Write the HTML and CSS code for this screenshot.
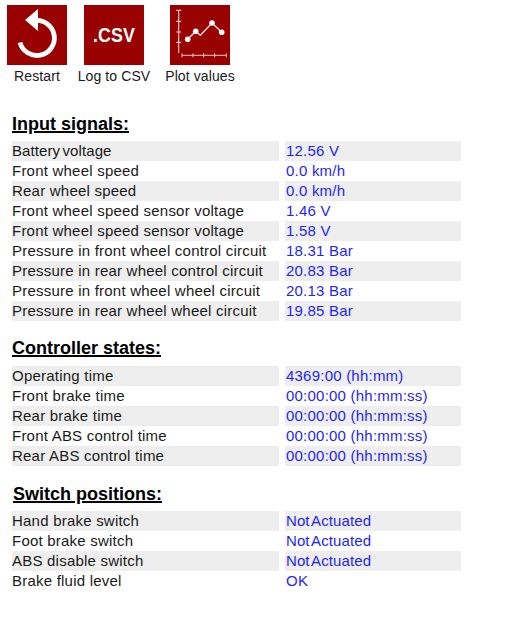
FILE: index.html
```html
<!DOCTYPE html>
<html lang="en">
<head>
  <meta charset="UTF-8">
  <title>ABS diagnostics</title>
  <link rel="stylesheet" href="styles.css">
</head>
<body>

  <div class="toolbar">
    <div class="tool tool-restart">
      <svg class="icon" viewBox="0 0 60 60">
        <rect width="60" height="60" fill="#990000"/>
        <path d="M29 15.500 A17.500 17.500 0 1 1 13 37.500" fill="none" stroke="#fff" stroke-width="4.800"/>
        <path d="M18 15 L31 4 L31 26 Z" fill="#fff"/>
      </svg>
      <span>Restart</span>
    </div>
    <div class="tool tool-csv">
      <svg class="icon" viewBox="0 0 60 60">
        <rect width="60" height="60" fill="#990000"/>
        <text x="9" y="37" class="csv-text" textLength="42" lengthAdjust="spacingAndGlyphs">.CSV</text>
      </svg>
      <span>Log to CSV</span>
    </div>
    <div class="tool tool-plot">
      <svg class="icon" viewBox="0 0 60 60">
        <rect width="60" height="60" fill="#990000"/>
        <path d="M8.700 5 V48 M6.200 5.300 H11.200 M6.200 16.300 H11.200 M6.200 27 H11.200 M6.200 37.300 H11.200" fill="none" stroke="#e8c8c8" stroke-width="1.200"/>
        <path d="M12 50.300 H56.300 M12 48.300 V52.300 M23 48.300 V52.300 M33.700 48.300 V52.300 M44.700 48.300 V52.300 M56.300 48.300 V52.300" fill="none" stroke="#e8c8c8" stroke-width="1"/>
        <path d="M17.700 34.300 L25.700 26.300 L30.300 30.300 L42 18 L51.700 27.300" fill="none" stroke="#f0d8d8" stroke-width="1.500"/>
        <circle cx="17.700" cy="34.300" r="2.800" fill="#fff"/>
        <circle cx="25.700" cy="26.300" r="2.800" fill="#fff"/>
        <circle cx="42" cy="18" r="2.800" fill="#fff"/>
        <circle cx="51.700" cy="27.300" r="2.800" fill="#fff"/>
      </svg>
      <span>Plot values</span>
    </div>
  </div>

  <h2 class="first">Input signals:</h2>
  <div class="rows">
    <div class="row"><div class="name tight">Battery voltage</div><div class="value">12.56 V</div></div>
    <div class="row"><div class="name">Front wheel speed</div><div class="value">0.0 km/h</div></div>
    <div class="row"><div class="name">Rear wheel speed</div><div class="value">0.0 km/h</div></div>
    <div class="row"><div class="name">Front wheel speed sensor voltage</div><div class="value">1.46 V</div></div>
    <div class="row"><div class="name">Front wheel speed sensor voltage</div><div class="value">1.58 V</div></div>
    <div class="row"><div class="name">Pressure in front wheel control circuit</div><div class="value">18.31 Bar</div></div>
    <div class="row"><div class="name">Pressure in rear wheel control circuit</div><div class="value">20.83 Bar</div></div>
    <div class="row"><div class="name">Pressure in front wheel wheel circuit</div><div class="value">20.13 Bar</div></div>
    <div class="row"><div class="name">Pressure in rear wheel wheel circuit</div><div class="value">19.85 Bar</div></div>
  </div>

  <h2>Controller states:</h2>
  <div class="rows">
    <div class="row"><div class="name">Operating time</div><div class="value">4369:00 (hh:mm)</div></div>
    <div class="row"><div class="name">Front brake time</div><div class="value">00:00:00 (hh:mm:ss)</div></div>
    <div class="row"><div class="name">Rear brake time</div><div class="value">00:00:00 (hh:mm:ss)</div></div>
    <div class="row"><div class="name">Front ABS control time</div><div class="value">00:00:00 (hh:mm:ss)</div></div>
    <div class="row"><div class="name">Rear ABS control time</div><div class="value">00:00:00 (hh:mm:ss)</div></div>
  </div>

  <h2 class="third">Switch positions:</h2>
  <div class="rows">
    <div class="row"><div class="name">Hand brake switch</div><div class="value tight">Not Actuated</div></div>
    <div class="row"><div class="name">Foot brake switch</div><div class="value tight">Not Actuated</div></div>
    <div class="row"><div class="name">ABS disable switch</div><div class="value tight">Not Actuated</div></div>
    <div class="row"><div class="name">Brake fluid level</div><div class="value">OK</div></div>
  </div>

</body>
</html>
```

FILE: styles.css
```css
body { margin: 0; padding: 5px 0 0 12px; font-family: "Liberation Sans", Arial, sans-serif; font-size: 14px; color: #1a1a1a; background: #fff; }
.toolbar { display: flex; margin-left: -5px; }
.tool { display: flex; flex-direction: column; align-items: center; letter-spacing: 0.1px; }
.tool span { margin-top: 3px; line-height: 17px; white-space: nowrap; }
.tool-restart { width: 60px; }
.tool-csv { width: 72px; margin-left: 11px; }
.tool-plot { width: 72px; margin-left: 14px; }
.icon { width: 60px; height: 60px; display: block; }
.csv-text { font-family: "Liberation Sans", Arial, sans-serif; font-size: 19.5px; font-weight: bold; fill: #fff; }
h2 { margin: 17px 0 0; font-size: 18px; line-height: 20px; height: 20px; font-weight: bold; color: #000; text-decoration: underline; text-decoration-thickness: 2px; }
h2.first { margin-top: 29px; margin-bottom: 7px; }
h2.third { margin-top: 18px; margin-left: 1px; }
.rows { margin-top: 8px; width: 449px; }
h2.first + .rows { margin-top: 0; }
h2.third + .rows { margin-top: 7px; }
.row { display: flex; gap: 6px; height: 20px; line-height: 20px; font-size: 15px; letter-spacing: 0.22px; }
.name { width: 267px; white-space: nowrap; }
.value { flex: 1; padding-left: 1px; color: #1f1fff; }
.tight { word-spacing: -2px; letter-spacing: 0.1px; }
.row:nth-child(odd) .name, .row:nth-child(odd) .value { background: #eeeeee; }
```
